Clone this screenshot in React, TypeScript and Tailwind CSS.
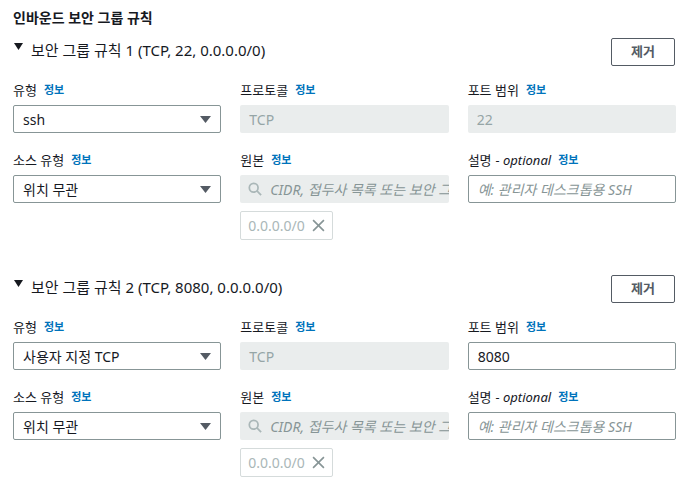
import React from 'react';

interface Rule {
  id: number;
  summary: string;
  type: string;
  port: string;
  portEditable: boolean;
}

const rules: Rule[] = [
  { id: 1, summary: '(TCP, 22, 0.0.0.0/0)', type: 'ssh', port: '22', portEditable: false },
  { id: 2, summary: '(TCP, 8080, 0.0.0.0/0)', type: '사용자 지정 TCP', port: '8080', portEditable: true },
];

function Label({ text, optional }: { text: string; optional?: boolean }) {
  return (
    <div className="h-[20px] flex items-center text-[13px] text-[#16191f] leading-[20px]">
      <span>{text}</span>
      {optional && <span className="italic ml-1">- optional</span>}
      <span className="ml-[7px] text-[11px] font-bold text-[#0073bb]">정보</span>
    </div>
  );
}

function Caret() {
  return (
    <svg width="11" height="7" viewBox="0 0 11 7" className="shrink-0">
      <path d="M0 0h11L5.5 7z" fill="#545b64" />
    </svg>
  );
}

function SelectBox({ value }: { value: string }) {
  return (
    <div className="mt-[5px] h-[28px] flex items-center justify-between pl-[9px] pr-[9px] border border-[#879596] rounded-[2px] bg-white text-[14px] text-[#16191f]">
      <span>{value}</span>
      <Caret />
    </div>
  );
}

function DisabledBox({ value }: { value: string }) {
  return (
    <div className="mt-[5px] h-[28px] flex items-center pl-[9px] rounded-[2px] bg-[#eaeded] text-[14px] text-[#95a5a6]">
      {value}
    </div>
  );
}

function TextBox({ value, placeholder }: { value?: string; placeholder?: string }) {
  return (
    <div className="mt-[5px] h-[28px] flex items-center pl-[9px] border border-[#879596] rounded-[2px] bg-white text-[14px] overflow-hidden whitespace-nowrap">
      {value ? (
        <span className="text-[#16191f]">{value}</span>
      ) : (
        <span className="italic text-[#879596]">{placeholder}</span>
      )}
    </div>
  );
}

function SourceSearch() {
  return (
    <div>
      {/* placeholder is clipped by the box, as in the console */}
      <div className="mt-[5px] h-[28px] flex items-center pl-[8px] rounded-[2px] bg-[#eaeded] text-[14px] overflow-hidden whitespace-nowrap">
        <svg width="14" height="14" viewBox="0 0 16 16" className="shrink-0" fill="none" stroke="#aab7b8" strokeWidth="2">
          <circle cx="6.5" cy="6.5" r="5" />
          <path d="M10.2 10.2L15 15" />
        </svg>
        <span className="ml-[8px] italic text-[#879596]">CIDR, 접두사 목록 또는 보안 그룹</span>
      </div>
      <div className="mt-[8px] inline-flex items-center h-[29px] pl-[7px] pr-[7px] border border-[#d5dbdb] rounded-[2px] text-[14px] text-[#aab7b8]">
        <span>0.0.0.0/0</span>
        <svg width="13" height="13" viewBox="0 0 12 12" className="ml-[7px]" fill="none" stroke="#879596" strokeWidth="1.5">
          <path d="M1 1l10 10M11 1L1 11" />
        </svg>
      </div>
    </div>
  );
}

function RuleSection({ rule }: { rule: Rule }) {
  return (
    <div>
      <div className="flex items-start justify-between pr-[12px]">
        <div className="flex items-start mt-[2px]">
          <svg width="9" height="7" viewBox="0 0 9 7" className="ml-[14px] mt-[3px]">
            <path d="M0 0h9L4.5 7z" fill="#16191f" />
          </svg>
          <span className="ml-[8px] text-[15px] leading-[20px] text-[#16191f]">
            보안 그룹 규칙 {rule.id} {rule.summary}
          </span>
        </div>
        <button className="w-[64px] h-[28px] border border-[#545b64] rounded-[2px] text-[13px] font-bold text-[#545b64] bg-white">
          제거
        </button>
      </div>
      <div className="mt-[14px] pl-[13px] pr-[11px] grid grid-cols-3 gap-x-[19px]">
        <div>
          <Label text="유형" />
          <SelectBox value={rule.type} />
        </div>
        <div>
          <Label text="프로토콜" />
          <DisabledBox value="TCP" />
        </div>
        <div>
          <Label text="포트 범위" />
          {rule.portEditable ? <TextBox value={rule.port} /> : <DisabledBox value={rule.port} />}
        </div>
        <div className="mt-[17px]">
          <Label text="소스 유형" />
          <SelectBox value="위치 무관" />
        </div>
        <div className="mt-[17px]">
          <Label text="원본" />
          <SourceSearch />
        </div>
        <div className="mt-[17px]">
          <Label text="설명" optional />
          <TextBox placeholder="예: 관리자 데스크톱용 SSH" />
        </div>
      </div>
    </div>
  );
}

export default function App() {
  return (
    <div
      className="w-[687px] h-[491px] bg-white overflow-hidden"
      style={{ fontFamily: '"Noto Sans", "Noto Sans CJK KR", sans-serif' }}
    >
      <div className="pt-[8px] pl-[13px] h-[38px] text-[14px] font-bold leading-[20px] text-[#16191f]">
        인바운드 보안 그룹 규칙
      </div>
      <RuleSection rule={rules[0]} />
      <div className="h-[35px]" />
      <RuleSection rule={rules[1]} />
    </div>
  );
}
